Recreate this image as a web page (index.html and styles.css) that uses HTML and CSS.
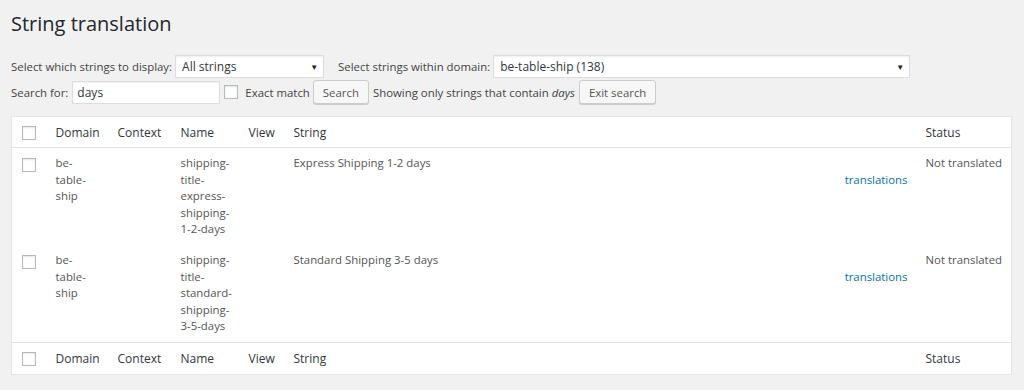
FILE: index.html
```html
<!DOCTYPE html>
<html lang="en">
<head>
    <meta charset="UTF-8">
    <title>String translation</title>
    <link rel="stylesheet" href="styles.css">
</head>
<body>
    <div class="wrap">
        <h1>String translation</h1>

        <div class="filters">
            <label>Select which strings to display:</label>
            <div class="select sel-status">All strings<span class="arrow">&#9660;</span></div>
            <label class="gap">Select strings within domain:</label>
            <div class="select sel-domain">be-table-ship (138)<span class="arrow">&#9660;</span></div>
        </div>

        <div class="filters">
            <label>Search for:</label>
            <div class="input">days</div>
            <span class="checkbox"></span>
            <label class="tight">Exact match</label>
            <button class="button">Search</button>
            <span class="note">Showing only strings that contain <em>days</em></span>
            <button class="button">Exit search</button>
        </div>

        <table class="strings">
            <colgroup>
                <col class="c-cb">
                <col class="c-domain">
                <col class="c-context">
                <col class="c-name">
                <col class="c-view">
                <col>
                <col class="c-status">
            </colgroup>
            <thead>
                <tr>
                    <th><span class="checkbox"></span></th>
                    <th>Domain</th>
                    <th>Context</th>
                    <th>Name</th>
                    <th>View</th>
                    <th>String</th>
                    <th class="status">Status</th>
                </tr>
            </thead>
            <tbody>
                <tr>
                    <td><span class="checkbox"></span></td>
                    <td>be-table-ship</td>
                    <td></td>
                    <td>shipping-title-express-shipping-1-2-days</td>
                    <td></td>
                    <td>Express Shipping 1-2 days<div class="tr-link"><a href="#">translations</a></div></td>
                    <td class="status">Not translated</td>
                </tr>
                <tr>
                    <td><span class="checkbox"></span></td>
                    <td>be-table-ship</td>
                    <td></td>
                    <td>shipping-title-standard-shipping-3-5-days</td>
                    <td></td>
                    <td>Standard Shipping 3-5 days<div class="tr-link"><a href="#">translations</a></div></td>
                    <td class="status">Not translated</td>
                </tr>
            </tbody>
            <tfoot>
                <tr>
                    <th><span class="checkbox"></span></th>
                    <th>Domain</th>
                    <th>Context</th>
                    <th>Name</th>
                    <th>View</th>
                    <th>String</th>
                    <th class="status">Status</th>
                </tr>
            </tfoot>
        </table>
    </div>
</body>
</html>
```

FILE: styles.css
```css
body { margin: 0; background: #f1f1f1; font-family: "Open Sans", sans-serif; font-size: 11.4px; color: #444; }
.wrap { padding: 9px 12px 0 11px; }
h1 { margin: 0 0 15px; font-size: 20px; font-weight: 400; line-height: 29px; color: #23282d; }

.filters { display: flex; align-items: center; height: 26px; }
.filters label { margin-right: 3px; }
.filters .gap { margin-left: 14px; }
.filters .tight { margin-right: 3px; }
.select { position: relative; height: 23px; line-height: 22px; box-sizing: border-box; padding: 0 6px; background: #fff; border: 1px solid #ddd; box-shadow: inset 0 1px 2px rgba(0,0,0,0.07); font-size: 12px; color: #32373c; }
.sel-status { width: 149px; }
.sel-domain { width: 417px; }
.select .arrow { position: absolute; right: 5px; top: 0; font-size: 8px; color: #222; }
.input { width: 148px; height: 23px; line-height: 22px; margin-left: 1px; box-sizing: border-box; padding: 0 4px; background: #fff; border: 1px solid #ddd; box-shadow: inset 0 1px 2px rgba(0,0,0,0.07); font-size: 12px; color: #32373c; }
.checkbox { display: block; width: 14px; height: 14px; box-sizing: border-box; border: 1px solid #b4b9be; background: #fff; box-shadow: inset 0 1px 2px rgba(0,0,0,0.1); }
.filters .checkbox { margin: 0 7px 0 4px; }
.button { height: 24px; padding: 0 9px; margin: 0 4px 0 0; font-family: inherit; font-size: 11.4px; color: #555; background: #f7f7f7; border: 1px solid #ccc; border-radius: 3px; box-shadow: 0 1px 0 #ccc; }
.note { color: #444; margin-right: 4px; }

.strings { width: 1001px; margin-top: 11px; border-collapse: collapse; table-layout: fixed; background: #fff; border: 1px solid #e5e5e5; box-shadow: 0 1px 1px rgba(0,0,0,0.04); }
.c-cb { width: 34px; }
.c-domain { width: 62px; }
.c-context { width: 63px; }
.c-name { width: 68px; }
.c-view { width: 45px; }
.c-status { width: 94px; }
th { padding: 8px 10px; height: 15px; text-align: left; font-weight: 400; font-size: 12px; line-height: 15px; color: #32373c; }
thead th { padding-bottom: 7px; border-bottom: 1px solid #e1e1e1; }
tfoot th { border-top: 1px solid #e1e1e1; }
th .checkbox { margin-top: 1px; }
td { padding: 7px 10px; vertical-align: top; line-height: 16.6px; color: #555; }
th:first-child, td:first-child { padding-left: 10px; padding-right: 0; }
th.status, td.status { padding-left: 8px; padding-right: 4px; }
td .checkbox { margin-top: 3px; }
.tr-link { text-align: right; }
a { color: #0073aa; text-decoration: none; }
```
